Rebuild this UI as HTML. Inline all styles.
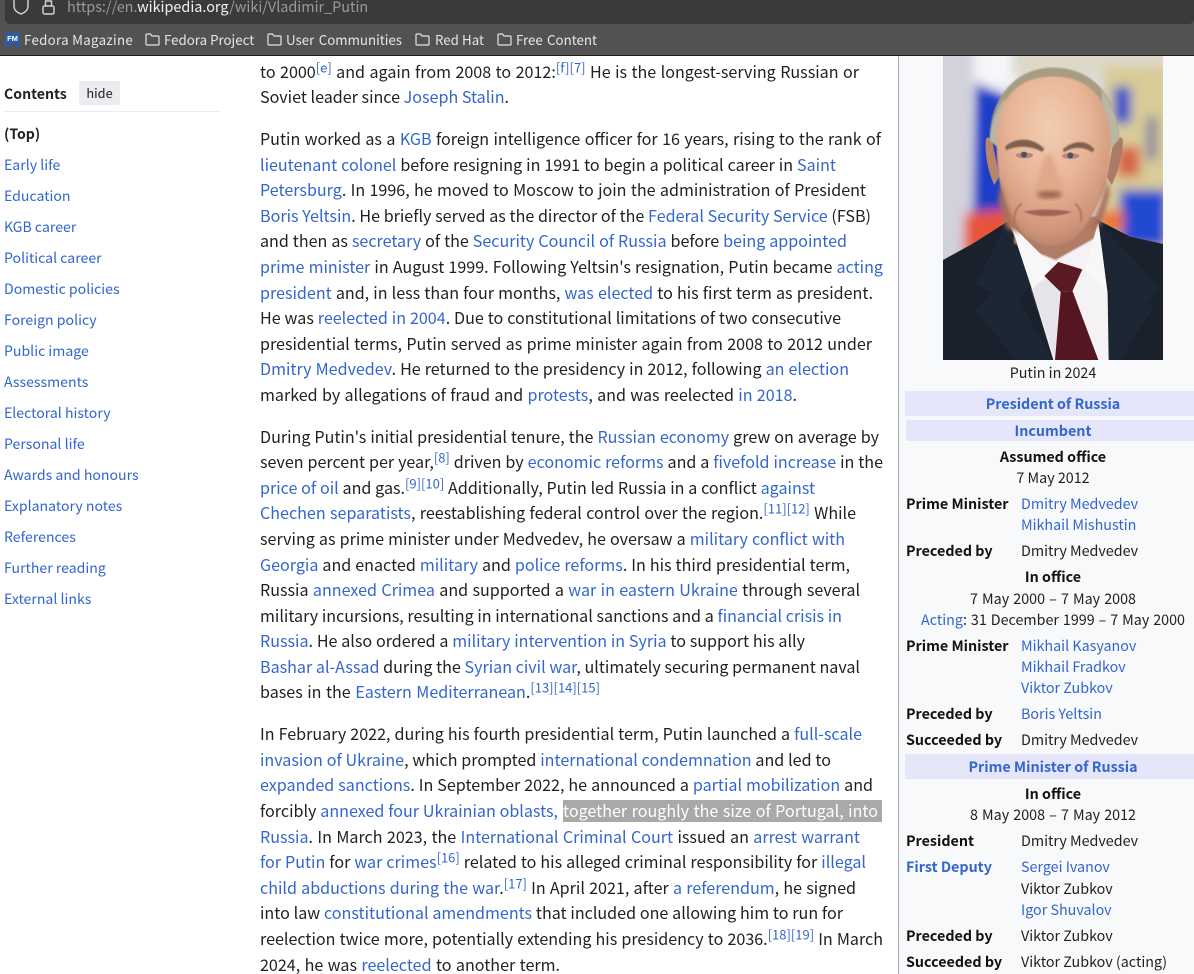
<!DOCTYPE html>
<html lang="en"><head><meta charset="utf-8"><title>Vladimir Putin</title>
<style>
html,body{margin:0;padding:0;width:1194px;height:974px;overflow:hidden;background:#fff}
body{position:relative;font-family:"Noto Sans CJK SC","Liberation Sans",sans-serif;color:#202122}
a{color:#3366cc;text-decoration:none}
.l{position:absolute;left:260px;height:26px;line-height:26px;font-size:16.1px;white-space:nowrap;text-align:justify;text-align-last:justify}
.l sup{font-size:13px;line-height:0;vertical-align:5.5px;color:#3366cc}
.s{position:absolute;left:4px;font-size:14.1px;line-height:20px;height:20px;white-space:nowrap;color:#3366cc}
.i{position:absolute;font-size:14.3px;line-height:20px;height:20px;white-space:nowrap}
.c{left:899px;width:308px;text-align:center}
.h{left:906px;font-weight:700;color:#111}
.v{left:1021px}
.b{font-weight:700}
.band{position:absolute;background:#e6e6fa;left:905px;width:289px}
.bm{position:absolute;top:31px;font-size:13.3px;line-height:18px;color:#e6e6e6;white-space:nowrap}
.fold{position:absolute;top:33px}
.j{text-align:justify;text-align-last:justify}
</style></head><body>
<div style="position:absolute;left:0;top:0;width:1194px;height:55px;background:#525252"></div>
<div style="position:absolute;left:5px;top:-8px;width:1189px;height:32px;background:#3a3a3a;border-radius:5px"></div>
<div style="position:absolute;left:0;top:55px;width:1194px;height:1px;background:#1c1c1c"></div>
<svg style="position:absolute;left:12px;top:0" width="46" height="16" viewBox="0 0 46 16" fill="none" stroke="#d4d4d4" stroke-width="1.4"><path d="M2 0v6c0 4 3 6.500 7 8 4-1.500 7-4 7-8V0"/><rect x="31" y="6" width="11" height="8" rx="1.500"/><path d="M33.500 6V1h6v5"/></svg>
<div style="position:absolute;left:67px;top:-3px;font-size:14.4px;line-height:20px;color:#9b9b9b;white-space:nowrap;width:289px;text-align-last:justify">https://en.<span style="color:#f2f2f2">wikipedia.org</span>/wiki/Vladimir_Putin</div>

<svg style="position:absolute;left:5px;top:33px" width="15" height="15" viewBox="0 0 15 15"><path d="M0 0h15v15l-7.500-4L0 15z" fill="#2a5aa8"/><text x="7.500" y="8" font-size="7.500" font-weight="700" fill="#fff" text-anchor="middle" font-family="Liberation Sans">FM</text></svg>
<div class="bm j" style="left:24px;width:108px;letter-spacing:.3px">Fedora Magazine</div>
<svg class="fold" style="left:145px" width="15" height="13" viewBox="0 0 15 13" fill="none" stroke="#e6e6e6" stroke-width="1.200"><path d="M1 3V2q0-1 1-1h3.500l1.500 2h6q1 0 1 1v7q0 1-1 1H2q-1 0-1-1z"/></svg>
<div class="bm j" style="left:164px;width:90px">Fedora Project</div>
<svg class="fold" style="left:267px" width="15" height="13" viewBox="0 0 15 13" fill="none" stroke="#e6e6e6" stroke-width="1.200"><path d="M1 3V2q0-1 1-1h3.500l1.500 2h6q1 0 1 1v7q0 1-1 1H2q-1 0-1-1z"/></svg>
<div class="bm j" style="left:286px;width:116px">User Communities</div>
<svg class="fold" style="left:415px" width="15" height="13" viewBox="0 0 15 13" fill="none" stroke="#e6e6e6" stroke-width="1.200"><path d="M1 3V2q0-1 1-1h3.500l1.500 2h6q1 0 1 1v7q0 1-1 1H2q-1 0-1-1z"/></svg>
<div class="bm j" style="left:435px;width:49px">Red Hat</div>
<svg class="fold" style="left:497px" width="15" height="13" viewBox="0 0 15 13" fill="none" stroke="#e6e6e6" stroke-width="1.200"><path d="M1 3V2q0-1 1-1h3.500l1.500 2h6q1 0 1 1v7q0 1-1 1H2q-1 0-1-1z"/></svg>
<div class="bm j" style="left:516px;width:81px">Free Content</div>

<div class="s b" style="top:84px;color:#202122">Contents</div>
<div style="position:absolute;left:79px;top:81px;width:41px;height:24px;background:#eaecf0;border-radius:2px;font-size:12.8px;line-height:23px;text-align:center">hide</div>
<div style="position:absolute;left:4px;top:111px;width:216px;height:1px;background:#eaecf0"></div>
<div class="s b" style="top:124px;color:#202122">(Top)</div>
<div class="s" style="top:155px">Early life</div>
<div class="s" style="top:186px">Education</div>
<div class="s" style="top:217px">KGB career</div>
<div class="s" style="top:248px">Political career</div>
<div class="s" style="top:279px">Domestic policies</div>
<div class="s" style="top:310px">Foreign policy</div>
<div class="s" style="top:341px">Public image</div>
<div class="s" style="top:372px">Assessments</div>
<div class="s" style="top:403px">Electoral history</div>
<div class="s" style="top:434px">Personal life</div>
<div class="s" style="top:465px">Awards and honours</div>
<div class="s" style="top:496px">Explanatory notes</div>
<div class="s" style="top:527px">References</div>
<div class="s" style="top:558px">Further reading</div>
<div class="s" style="top:589px">External links</div>

<div class="l" style="top:58px;width:599px">to 2000<sup>[e]</sup> and again from 2008 to 2012:<sup>[f][7]</sup> He is the longest-serving Russian or</div>
<div class="l" style="top:83px;width:244px">Soviet leader since <a>Joseph Stalin</a>.</div>
<div class="l" style="top:125px;width:621px">Putin worked as a <a>KGB</a> foreign intelligence officer for 16 years, rising to the rank of</div>
<div class="l" style="top:151px;width:576px"><a>lieutenant colonel</a> before resigning in 1991 to begin a political career in <a>Saint</a></div>
<div class="l" style="top:176px;width:606px"><a>Petersburg</a>. In 1996, he moved to Moscow to join the administration of President</div>
<div class="l" style="top:202px;width:611px"><a>Boris Yeltsin</a>. He briefly served as the director of the <a>Federal Security Service</a> (FSB)</div>
<div class="l" style="top:227px;width:587px">and then as <a>secretary</a> of the <a>Security Council of Russia</a> before <a>being appointed</a></div>
<div class="l" style="top:253px;width:623px"><a>prime minister</a> in August 1999. Following Yeltsin's resignation, Putin became <a>acting</a></div>
<div class="l" style="top:279px;width:613px"><a>president</a> and, in less than four months, <a>was elected</a> to his first term as president.</div>
<div class="l" style="top:304px;width:581px">He was <a>reelected in 2004</a>. Due to constitutional limitations of two consecutive</div>
<div class="l" style="top:330px;width:612px">presidential terms, Putin served as prime minister again from 2008 to 2012 under</div>
<div class="l" style="top:355px;width:589px"><a>Dmitry Medvedev</a>. He returned to the presidency in 2012, following <a>an election</a></div>
<div class="l" style="top:381px;width:537px">marked by allegations of fraud and <a>protests</a>, and was reelected <a>in 2018</a>.</div>
<div class="l" style="top:423px;width:619px">During Putin's initial presidential tenure, the <a>Russian economy</a> grew on average by</div>
<div class="l" style="top:448px;width:623px">seven percent per year,<sup>[8]</sup> driven by <a>economic reforms</a> and a <a>fivefold increase</a> in the</div>
<div class="l" style="top:474px;width:555px"><a>price of oil</a> and gas.<sup>[9][10]</sup> Additionally, Putin led Russia in a conflict <a>against</a></div>
<div class="l" style="top:499px;width:596px"><a>Chechen separatists</a>, reestablishing federal control over the region.<sup>[11][12]</sup> While</div>
<div class="l" style="top:525px;width:585px">serving as prime minister under Medvedev, he oversaw a <a>military conflict with</a></div>
<div class="l" style="top:551px;width:590px"><a>Georgia</a> and enacted <a>military</a> and <a>police reforms</a>. In his third presidential term,</div>
<div class="l" style="top:576px;width:600px">Russia <a>annexed Crimea</a> and supported a <a>war in eastern Ukraine</a> through several</div>
<div class="l" style="top:602px;width:582px">military incursions, resulting in international sanctions and a <a>financial crisis in</a></div>
<div class="l" style="top:627px;width:545px"><a>Russia</a>. He also ordered a <a>military intervention in Syria</a> to support his ally</div>
<div class="l" style="top:653px;width:600px"><a>Bashar al-Assad</a> during the <a>Syrian civil war</a>, ultimately securing permanent naval</div>
<div class="l" style="top:678px;width:340px">bases in the <a>Eastern Mediterranean</a>.<sup>[13][14][15]</sup></div>
<div class="l" style="top:720px;width:602px">In February 2022, during his fourth presidential term, Putin launched a <a>full-scale</a></div>
<div class="l" style="top:746px;width:571px"><a>invasion of Ukraine</a>, which prompted <a>international condemnation</a> and led to</div>
<div class="l" style="top:771px;width:613px"><a>expanded sanctions</a>. In September 2022, he announced a <a>partial mobilization</a> and</div>
<div style="position:absolute;left:563px;top:800px;width:319px;height:22px;background:#a9a9a9"></div>
<div class="l" style="top:797px;width:298px">forcibly <a>annexed four Ukrainian oblasts,</a></div>
<div class="l" style="top:797px;left:563px;width:315px;color:#fff">together roughly the size of Portugal, into</div>
<div class="l" style="top:823px;width:600px"><a>Russia</a>. In March 2023, the <a>International Criminal Court</a> issued an <a>arrest warrant</a></div>
<div class="l" style="top:848px;width:606px"><a>for Putin</a> for <a>war crimes</a><sup>[16]</sup> related to his alleged criminal responsibility for <a>illegal</a></div>
<div class="l" style="top:874px;width:596px"><a>child abductions during the war</a>.<sup>[17]</sup> In April 2021, after <a>a referendum</a>, he signed</div>
<div class="l" style="top:899px;width:583px">into law <a>constitutional amendments</a> that included one allowing him to run for</div>
<div class="l" style="top:925px;width:623px">reelection twice more, potentially extending his presidency to 2036.<sup>[18][19]</sup> In March</div>
<div class="l" style="top:951px;width:300px">2024, he was <a>reelected</a> to another term.</div>

<div style="position:absolute;left:898px;top:56px;width:296px;height:918px;background:#f8f9fa;border-left:1px solid #a2a9b1"></div>

<svg style="position:absolute;left:943px;top:56px" width="220" height="304" viewBox="159 48 660 912" preserveAspectRatio="none">
<defs>
<filter id="b1" x="-40%" y="-40%" width="180%" height="180%"><feGaussianBlur stdDeviation="16"/></filter>
<filter id="b2" x="-30%" y="-30%" width="160%" height="160%"><feGaussianBlur stdDeviation="7"/></filter>
<filter id="b3" x="-20%" y="-20%" width="140%" height="140%"><feGaussianBlur stdDeviation="2.500"/></filter>
<radialGradient id="sk" cx=".46" cy=".3" r=".78"><stop offset="0" stop-color="#f2cdb0"/><stop offset=".45" stop-color="#e8b597"/><stop offset=".8" stop-color="#cf9477"/><stop offset="1" stop-color="#a87560"/></radialGradient>
<clipPath id="cp"><rect x="159" y="48" width="660" height="912"/></clipPath>
</defs>
<g clip-path="url(#cp)">
<rect x="159" y="48" width="660" height="912" fill="#dcdde5"/>
<g filter="url(#b1)">
<rect x="120" y="20" width="125" height="720" fill="#d2d2dc"/>
<rect x="255" y="10" width="130" height="130" fill="#f7f7fa"/>
<rect x="365" y="10" width="500" height="100" fill="#ddd9c9"/>
<path d="M258 125l110 60v345l-120 20z" fill="#1c3cc6"/>
<path d="M225 520l140-15v110l-145 35z" fill="#e8523a"/>
<rect x="640" y="80" width="220" height="560" fill="#d8cc98"/>
<rect x="672" y="140" width="50" height="110" fill="#2a48cc"/>
<rect x="680" y="320" width="70" height="90" fill="#d8644c"/>
<rect x="690" y="450" width="140" height="170" fill="#2348d2"/>
<rect x="630" y="510" width="70" height="70" fill="#ec7433"/>
<rect x="770" y="230" width="30" height="130" fill="#8080a0"/>
</g>
<path d="M159 660L250 610 352 545 400 640H590L620 538 720 590 819 612V970H159z" fill="#1a212d"/>
<path d="M255 735l97-190 70 190-35 45 100 180H380L255 810 310 755z" fill="#1f2634" filter="url(#b3)"/>
<path d="M622 540l188 205-40 45 20 10-100 160h-35l5-200z" fill="#1e2533" filter="url(#b3)"/>
<path d="M362 555l128 90 135-95 28 215 3 195H490L425 745z" fill="#f4f2f5"/>
<path d="M425 745l70-50 15 60-15 205z" fill="#e6e3ea" filter="url(#b3)"/>
<path d="M372 530h250v60l-125 70-125-50z" fill="#b17c66" filter="url(#b3)"/>
<path d="M362 552l65 195 55-55-10-30z" fill="#f8f6f6"/>
<path d="M625 545l28 215-70-70 8-25z" fill="#f8f6f6"/>
<path d="M463 708l42-42 72 22-30 66-35 2z" fill="#5a1a24"/>
<path d="M512 756l36-2 77 206H495z" fill="#541620"/>
<path d="M288 295c10-8 18 5 22 25l18 90-15 25c-20-40-30-100-25-140z" fill="#b9846c"/>
<path d="M698 295c-12-8-25 2-30 25l-18 90 15 25c20-40 36-100 33-140z" fill="#ac7b66"/>
<path d="M300 305c-5-110 60-222 190-222 120 0 193 90 197 215l-25 25H325z" fill="#a89d82" filter="url(#b3)"/>
<path d="M300 300c5-60 28-105 46-125l12 125-20 30zM688 295c-5-60-28-110-52-145l-6 145 25 40z" fill="#b9b6a6" filter="url(#b3)"/>
<path d="M320 310c0-125 52-200 170-200s172 80 172 200c0 90-25 165-55 215-28 50-65 92-118 92-60 0-100-37-128-87-25-50-41-130-41-220z" fill="url(#sk)" filter="url(#b3)"/>
<path d="M335 420c8 60 30 120 60 160l-45-15-25-90zM650 410c-8 60-30 120-55 165l40-25 25-90z" fill="#a87058" filter="url(#b2)"/>
<path d="M345 320c30-28 82-30 118 6l-6 10c-35-20-75-20-108-5z" fill="#7f604f" filter="url(#b3)"/>
<path d="M518 328c32-28 72-30 95 0l-6 9c-25-18-58-18-85 0z" fill="#7f604f" filter="url(#b3)"/>
<ellipse cx="403" cy="346" rx="26" ry="9" fill="#b88878"/><circle cx="402" cy="344" r="9" fill="#4a5560"/>
<ellipse cx="542" cy="348" rx="26" ry="9" fill="#b88878"/><circle cx="541" cy="346" r="9" fill="#4a5560"/>
<path d="M462 345c-6 40-25 85-30 110 12 18 70 22 92 0-5-30-30-70-36-110z" fill="#e0a98a" filter="url(#b2)"/>
<ellipse cx="478" cy="464" rx="38" ry="11" fill="#9a634e" filter="url(#b2)"/>
<path d="M400 515c40-8 100-8 146 0-40 18-106 18-146 0z" fill="#a0625a" filter="url(#b3)"/>
<path d="M395 490c-18 15-25 35-22 62M555 490c15 15 22 30 18 55" stroke="#ad755e" stroke-width="6" fill="none" filter="url(#b3)"/>
</g></svg>

<div class="i c" style="top:363px">Putin in 2024</div>
<div class="band" style="top:391px;height:25px"></div>
<div class="i c b" style="top:394px"><a>President of Russia</a></div>
<div class="band" style="top:420px;height:21px;left:906px;width:288px"></div>
<div class="i c b" style="top:421px"><a>Incumbent</a></div>
<div class="i c b" style="top:447px;color:#111">Assumed office</div>
<div class="i c" style="top:468px">7 May 2012</div>
<div class="i h" style="top:494px">Prime Minister</div>
<div class="i v" style="top:494px"><a>Dmitry Medvedev</a></div>
<div class="i v" style="top:515px"><a>Mikhail Mishustin</a></div>
<div class="i h" style="top:541px">Preceded by</div>
<div class="i v" style="top:541px">Dmitry Medvedev</div>
<div class="i c b" style="top:567px;color:#111">In office</div>
<div class="i j" style="top:589px;left:970px;width:166px">7 May 2000 – 7 May 2008</div>
<div class="i j" style="top:610px;left:921px;width:264px"><a>Acting</a>: 31 December 1999 – 7 May 2000</div>
<div class="i h" style="top:636px">Prime Minister</div>
<div class="i v" style="top:636px"><a>Mikhail Kasyanov</a></div>
<div class="i v" style="top:657px"><a>Mikhail Fradkov</a></div>
<div class="i v" style="top:678px"><a>Viktor Zubkov</a></div>
<div class="i h" style="top:704px">Preceded by</div>
<div class="i v" style="top:704px"><a>Boris Yeltsin</a></div>
<div class="i h" style="top:730px">Succeeded by</div>
<div class="i v" style="top:730px">Dmitry Medvedev</div>
<div class="band" style="top:754px;height:25px"></div>
<div class="i c b" style="top:757px"><a>Prime Minister of Russia</a></div>
<div class="i c b" style="top:784px;color:#111">In office</div>
<div class="i j" style="top:805px;left:970px;width:166px">8 May 2008 – 7 May 2012</div>
<div class="i h" style="top:831px">President</div>
<div class="i v" style="top:831px">Dmitry Medvedev</div>
<div class="i h" style="top:857px"><a>First Deputy</a></div>
<div class="i v" style="top:857px"><a>Sergei Ivanov</a></div>
<div class="i v" style="top:879px">Viktor Zubkov</div>
<div class="i v" style="top:900px"><a>Igor Shuvalov</a></div>
<div class="i h" style="top:926px">Preceded by</div>
<div class="i v" style="top:926px">Viktor Zubkov</div>
<div class="i h" style="top:952px">Succeeded by</div>
<div class="i v" style="top:952px">Viktor Zubkov (acting)</div>
</body></html>
